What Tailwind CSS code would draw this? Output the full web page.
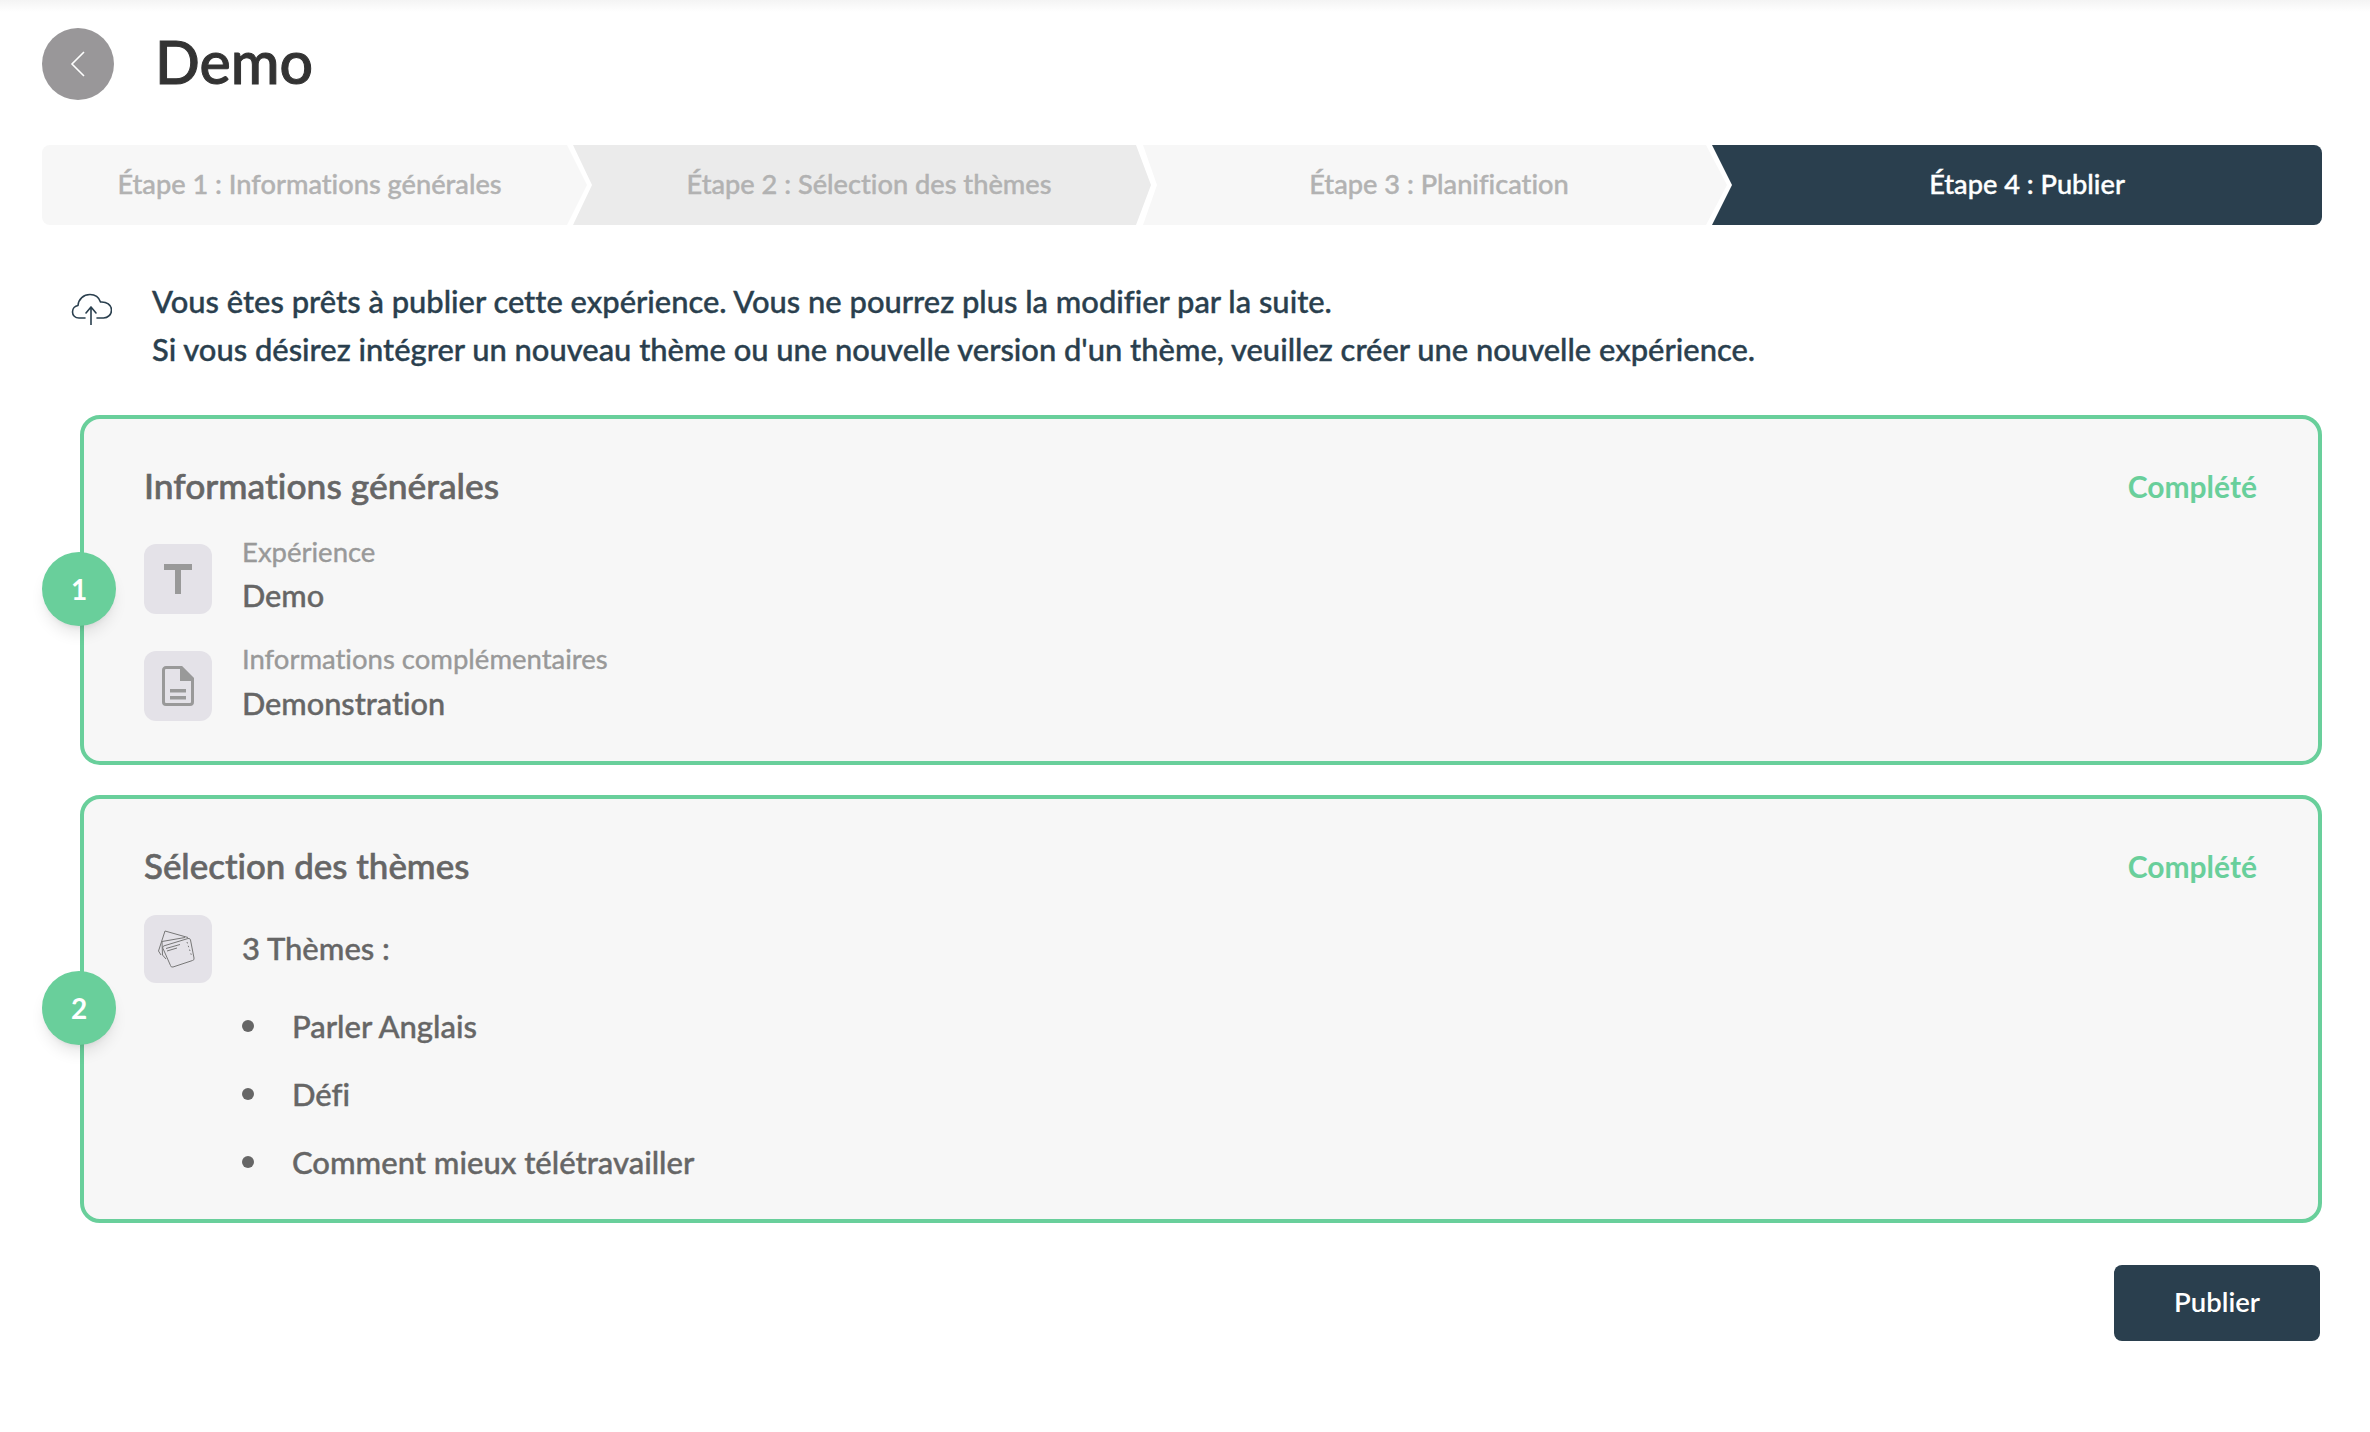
<!DOCTYPE html>
<html lang="fr">
<head>
  <meta charset="UTF-8" />
  <title>Demo</title>
  <script src="https://cdn.jsdelivr.net/npm/@tailwindcss/browser@4"></script>
</head>
<body class="bg-white min-h-screen font-['Lato',sans-serif] [font-variant-ligatures:none] relative">
  <div class="absolute top-0 left-0 right-0 h-3 bg-gradient-to-b from-[#f4f4f4] to-white"></div>
  <div class="relative w-[2370px] pl-[42px] pr-[48px] pt-[28px]">

    <!-- header -->
    <header class="flex items-center h-[72px] mb-[45px]">
      <button class="w-[72px] h-[72px] rounded-full bg-[#999799] flex items-center justify-center">
        <svg width="16" height="26" viewBox="0 0 16 26" fill="none" stroke="#fff" stroke-width="1.6"><path d="M14 1 2 13l12 12" /></svg>
      </button>
      <h1 class="ml-[41px] -mt-[6px] text-[59px] leading-none font-medium text-[#333] [-webkit-text-stroke:1px]">Demo</h1>
    </header>

    <!-- steps -->
    <nav class="flex h-[80px] text-[27.200px] font-medium [-webkit-text-stroke:0.4px]">
      <div class="w-[545px] pr-[10px] pb-[2px] flex items-center justify-center rounded-l-lg bg-[#f7f7f7] text-[#b2b2b2] [clip-path:polygon(0_0,525px_0,100%_50%,525px_100%,0_100%)]">Étape 1 : Informations générales</div>
      <div class="w-[578px] -ml-[14px] pl-[14px] pb-[2px] flex items-center justify-center bg-[#ebebeb] text-[#b2b2b2] [clip-path:polygon(0_0,563px_0,100%_50%,563px_100%,0_100%,19px_50%)]">Étape 2 : Sélection des thèmes</div>
      <div class="w-[584px] -ml-[8px] pl-[8px] pb-[2px] flex items-center justify-center bg-[#f7f7f7] text-[#b2b2b2] [clip-path:polygon(0_0,563px_0,100%_50%,563px_100%,0_100%,14px_50%)]">Étape 3 : Planification</div>
      <div class="w-[610px] -ml-[15px] pl-[20px] pb-[2px] flex items-center justify-center rounded-r-lg bg-[#2a3f4e] text-white [clip-path:polygon(0_0,100%_0,100%_100%,0_100%,20px_50%)]">Étape 4 : Publier</div>
    </nav>

    <!-- intro -->
    <section class="flex mt-[53px] text-[#2a3f4e] text-[30.900px] leading-[47.500px] font-medium [-webkit-text-stroke:0.4px]">
      <svg class="ml-[29px] mt-[15px] shrink-0" width="41" height="32" viewBox="21 23 41 32" fill="none" stroke="#2a3f4e" stroke-width="1.6" stroke-linecap="round" stroke-linejoin="round">
        <path d="M35 48h-6c-4 0-6.500-2.800-6.500-6 0-3.500 2.500-6 5.500-6.500C28.500 29 33.500 24.500 40 24.500c5 0 9 3 10.500 7.500 6-.5 11 3 11 8 0 4.500-3.500 8-8 8H47" />
        <path d="M41 55V37M36 43l5-6 5 6" />
      </svg>
      <div class="ml-[40px]">
        <p>Vous êtes prêts à publier cette expérience. Vous ne pourrez plus la modifier par la suite.</p>
        <p>Si vous désirez intégrer un nouveau thème ou une nouvelle version d'un thème, veuillez créer une nouvelle expérience.</p>
      </div>
    </section>

    <!-- card 1 -->
    <section class="relative ml-[38px] mt-[42px] border-4 border-[#69cf9b] rounded-[20px] bg-[#f7f7f7] pl-[60px] pr-[61px] pt-[47px] pb-[40px]">
      <div class="absolute -left-[42px] top-[calc(50%-1px)] -translate-y-1/2 w-[74px] h-[74px] rounded-full bg-[#69cf9b] shadow-lg flex items-center justify-center text-white text-[28px] font-bold">1</div>
      <div class="flex justify-between items-center h-[40px]">
        <h2 class="text-[#666] text-[35.400px] font-medium [-webkit-text-stroke:0.6px]">Informations générales</h2>
        <span class="text-[#69cf9b] text-[30px] font-bold">Complété</span>
      </div>
      <div class="flex mt-[38px] h-[70px]">
        <div class="w-[68px] h-[70px] rounded-xl bg-[#e4e2e8] flex items-center justify-center">
          <svg width="28" height="30" viewBox="0 0 28 30" fill="#999"><path d="M0 0h28v6H17v24h-6V6H0z" /></svg>
        </div>
        <div class="ml-[30px] -mt-[2px] [-webkit-text-stroke:0.4px]">
          <p class="text-[27.500px] leading-[20px] text-[#999]">Expérience</p>
          <p class="mt-[19px] text-[30.700px] leading-[30px] font-medium text-[#666]">Demo</p>
        </div>
      </div>
      <div class="flex mt-[37px] h-[70px]">
        <div class="w-[68px] h-[70px] rounded-xl bg-[#e4e2e8] flex items-center justify-center">
          <svg width="32" height="40" viewBox="0 0 32 40"><path d="M4 1.500h15L30.500 13v23a2.500 2.500 0 0 1-2.500 2.500H4A2.500 2.500 0 0 1 1.500 36V4A2.500 2.500 0 0 1 4 1.500z" fill="none" stroke="#999" stroke-width="3" /><path d="M18 0h2l12 12v3H18z" fill="#999" /><path d="M8 23h16v3.500H8zM8 30h16v3.500H8z" fill="#999" /></svg>
        </div>
        <div class="ml-[30px] -mt-[2px] [-webkit-text-stroke:0.4px]">
          <p class="text-[27.500px] leading-[20px] text-[#999]">Informations complémentaires</p>
          <p class="mt-[20px] text-[30.700px] leading-[30px] font-medium text-[#666]">Demonstration</p>
        </div>
      </div>
    </section>

    <!-- card 2 -->
    <section class="relative ml-[38px] mt-[30px] border-4 border-[#69cf9b] rounded-[20px] bg-[#f7f7f7] pl-[60px] pr-[61px] pt-[47px] pb-[37px]">
      <div class="absolute -left-[42px] top-[calc(50%-1px)] -translate-y-1/2 w-[74px] h-[74px] rounded-full bg-[#69cf9b] shadow-lg flex items-center justify-center text-white text-[28px] font-bold">2</div>
      <div class="flex justify-between items-center h-[40px]">
        <h2 class="text-[#666] text-[34.900px] font-medium [-webkit-text-stroke:0.6px]">Sélection des thèmes</h2>
        <span class="text-[#69cf9b] text-[30px] font-bold">Complété</span>
      </div>
      <div class="flex items-center mt-[29px] h-[68px]">
        <div class="w-[68px] h-[68px] rounded-xl bg-[#e4e2e8] flex items-center justify-center">
          <svg width="68" height="68" viewBox="14 16 68 68" fill="none" stroke="#777" stroke-width="1" stroke-linejoin="round">
            <path d="M31 56 28.500 52 35 32l23 6.500" />
            <path d="M36 60 32.500 56 32 42.500l23-4" />
            <path d="M33.500 47 58 39.500a2 2 0 0 1 2.500 1.500L64 59a2 2 0 0 1-1.500 2.500L43 68a2 2 0 0 1-2.500-1.500L33 49.500a2 2 0 0 1 .500-2.500z" />
            <path d="M36 49.500 50 45.500M37 52 47 49" />
            <path d="M57 43 62 58" stroke-dasharray="1.500 2.500" />
          </svg>
        </div>
        <span class="ml-[30px] -mt-[2px] text-[31px] font-medium text-[#666] [-webkit-text-stroke:0.4px]">3 Thèmes :</span>
      </div>
      <ul class="mt-[23px] ml-[98px] space-y-[28px] text-[31px] leading-[40px] font-medium text-[#666] [-webkit-text-stroke:0.4px]">
        <li class="flex items-center"><span class="w-3 h-3 rounded-full bg-[#666] mr-[38px]"></span>Parler Anglais</li>
        <li class="flex items-center"><span class="w-3 h-3 rounded-full bg-[#666] mr-[38px]"></span>Défi</li>
        <li class="flex items-center"><span class="w-3 h-3 rounded-full bg-[#666] mr-[38px]"></span>Comment mieux télétravailler</li>
      </ul>
    </section>

    <div class="flex justify-end mt-[42px] mr-[2px]">
      <button class="w-[206px] h-[76px] pb-[2px] rounded-lg bg-[#2a3f4e] text-white text-[27.500px] font-semibold">Publier</button>
    </div>
  </div>
</body>
</html>
